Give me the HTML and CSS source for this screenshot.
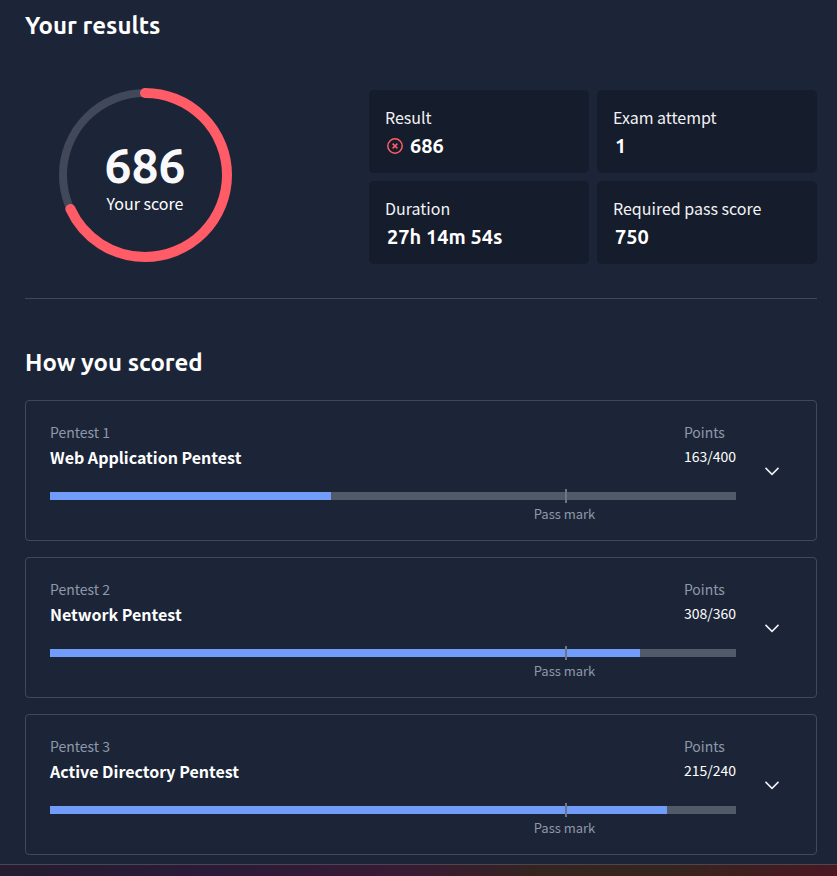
FILE: index.html
```
<!DOCTYPE html>
<html lang="en">
<head>
    <meta charset="UTF-8">
    <meta name="viewport" content="width=device-width, initial-scale=1.0">
    <title>Your results</title>
    <link rel="stylesheet" href="styles.css">
</head>
<body>
    <main class="panel">
        <section class="results">
            <h2>Your results</h2>

            <div class="summary">
                <div class="score">
                    <div class="score-ring">
                        <svg viewBox="0 0 174 174" aria-hidden="true">
                            <circle class="ring-track" cx="87" cy="87" r="82" />
                            <circle class="ring-value" cx="87" cy="87" r="82" pathLength="1000" stroke-dasharray="682 1000" transform="rotate(-90 87 87)" />
                        </svg>
                        <div class="score-text">
                            <strong>686</strong>
                            <span>Your score</span>
                        </div>
                    </div>
                </div>

                <dl class="stats">
                    <div class="stat">
                        <dt>Result</dt>
                        <dd>
                            <svg class="fail-icon" viewBox="0 0 16 16" aria-hidden="true">
                                <circle cx="8" cy="8" r="7.2" />
                                <path d="M5.6 5.6l4.8 4.8M10.4 5.6l-4.8 4.8" />
                            </svg>
                            686
                        </dd>
                    </div>
                    <div class="stat">
                        <dt>Exam attempt</dt>
                        <dd>1</dd>
                    </div>
                    <div class="stat">
                        <dt>Duration</dt>
                        <dd>27h 14m 54s</dd>
                    </div>
                    <div class="stat">
                        <dt>Required pass score</dt>
                        <dd>750</dd>
                    </div>
                </dl>
            </div>
        </section>

        <section class="breakdown">
            <h2>How you scored</h2>

            <article class="card">
                <div class="card-body">
                    <div class="card-head">
                        <div>
                            <p class="label">Pentest 1</p>
                            <h3>Web Application Pentest</h3>
                        </div>
                        <div>
                            <p class="label">Points</p>
                            <p class="points">163/400</p>
                        </div>
                    </div>
                    <div class="bar">
                        <div class="bar-track">
                            <div class="bar-fill" style="width: 41%"></div>
                        </div>
                        <div class="pass-mark">Pass mark</div>
                    </div>
                </div>
                <button class="toggle" type="button" aria-label="Show Web Application Pentest" aria-expanded="false">
                    <svg viewBox="0 0 16 16" aria-hidden="true"><path d="M1.5 3.9L8 10.4l6.5-6.5" /></svg>
                </button>
            </article>

            <article class="card">
                <div class="card-body">
                    <div class="card-head">
                        <div>
                            <p class="label">Pentest 2</p>
                            <h3>Network Pentest</h3>
                        </div>
                        <div>
                            <p class="label">Points</p>
                            <p class="points">308/360</p>
                        </div>
                    </div>
                    <div class="bar">
                        <div class="bar-track">
                            <div class="bar-fill" style="width: 86%"></div>
                        </div>
                        <div class="pass-mark">Pass mark</div>
                    </div>
                </div>
                <button class="toggle" type="button" aria-label="Show Network Pentest" aria-expanded="false">
                    <svg viewBox="0 0 16 16" aria-hidden="true"><path d="M1.5 3.9L8 10.4l6.5-6.5" /></svg>
                </button>
            </article>

            <article class="card">
                <div class="card-body">
                    <div class="card-head">
                        <div>
                            <p class="label">Pentest 3</p>
                            <h3>Active Directory Pentest</h3>
                        </div>
                        <div>
                            <p class="label">Points</p>
                            <p class="points">215/240</p>
                        </div>
                    </div>
                    <div class="bar">
                        <div class="bar-track">
                            <div class="bar-fill" style="width: 90%"></div>
                        </div>
                        <div class="pass-mark">Pass mark</div>
                    </div>
                </div>
                <button class="toggle" type="button" aria-label="Show Active Directory Pentest" aria-expanded="false">
                    <svg viewBox="0 0 16 16" aria-hidden="true"><path d="M1.5 3.9L8 10.4l6.5-6.5" /></svg>
                </button>
            </article>
        </section>
    </main>
</body>
</html>
```
FILE: styles.css
```
* {
    margin: 0;
    padding: 0;
    box-sizing: border-box;
}

body {
    min-height: 100vh;
    background: linear-gradient(90deg, #241c30 0%, #2b1a38 25%, #381a34 48%, #35241f 65%, #36241e 80%, #4a1722 100%);
    color: #fff;
    font-family: "Source Sans Pro", "Noto Sans CJK SC", sans-serif;
    font-size: 16px;
    line-height: 24px;
}

h2 {
    font-family: Ubuntu, "Noto Sans", sans-serif;
    font-size: 24px;
    font-weight: 600;
    line-height: 32px;
}

.panel {
    padding: 10px 20px 9px 25px;
    background-color: #1c2538;
    border-bottom: 1px solid #4b4650;
}

/* Summary */

.results {
    padding-bottom: 34px;
    border-bottom: 1px solid #414959;
}

.summary {
    display: flex;
    align-items: flex-start;
    margin-top: 46px;
}

.score {
    flex: 0 0 344px;
    padding-left: 33px;
}

.score-ring {
    display: grid;
    width: 174px;
    height: 174px;
}

.score-ring > * {
    grid-area: 1 / 1;
}

.score-ring circle {
    fill: none;
}

.ring-track {
    stroke: #40485a;
    stroke-width: 8;
}

.ring-value {
    stroke: #ff5c67;
    stroke-width: 10;
    stroke-linecap: round;
}

.score-text {
    display: flex;
    flex-direction: column;
    align-items: center;
    justify-content: center;
    padding-top: 4px;
}

.score-text strong {
    font-family: Ubuntu, "Noto Sans", sans-serif;
    font-size: 48px;
    font-weight: 600;
    line-height: 52px;
    color: #f9f9fb;
}

.stats {
    flex: 1;
    display: grid;
    grid-template-columns: 1fr 1fr;
    gap: 8px;
    margin-top: 2px;
}

.stat {
    padding: 15px 16px 10px;
    background-color: #151c2b;
    border-radius: 5px;
}

.stat dt {
    color: #f2f3f5;
}

.stat dd {
    display: flex;
    align-items: center;
    gap: 7px;
    padding-left: 2px;
    font-family: Ubuntu, "Noto Sans", sans-serif;
    font-size: 20px;
    font-weight: 600;
    line-height: 34px;
}

.fail-icon {
    width: 16px;
    height: 16px;
    fill: none;
    stroke: #ff5c67;
    stroke-width: 1.5;
}

/* Score cards */

.breakdown {
    display: flex;
    flex-direction: column;
    gap: 16px;
    padding-top: 48px;
}

.breakdown h2 {
    margin-bottom: 5px;
}

.card {
    display: flex;
    align-items: center;
    gap: 16px;
    padding: 19px 24px 16px;
    border: 1px solid #414959;
    border-radius: 4px;
}

.card-body {
    flex: 1;
}

.card-head {
    display: flex;
    justify-content: space-between;
}

.label {
    font-size: 14px;
    color: #8f98a8;
}

.card h3 {
    font-size: 16px;
    font-weight: 700;
    line-height: 26px;
}

.points {
    font-size: 14px;
}

.bar {
    position: relative;
    margin-top: 22px;
}

.bar-track {
    height: 8px;
    background-color: #515a68;
}

.bar-fill {
    height: 100%;
    background-color: #719cf9;
}

/* Pass mark tick at 75% of the bar */
.bar::after {
    content: "";
    position: absolute;
    top: -3px;
    left: 75%;
    width: 2px;
    height: 14px;
    background-color: #6b7586;
}

.pass-mark {
    width: 50%;
    margin: 4px 0 0 50%;
    font-size: 13px;
    line-height: 20px;
    text-align: center;
    color: #8f98a8;
}

.toggle {
    display: flex;
    align-items: center;
    justify-content: center;
    width: 40px;
    height: 40px;
    background: none;
    border: 0;
    color: #f2f3f5;
    cursor: pointer;
}

.toggle svg {
    width: 16px;
    height: 16px;
    fill: none;
    stroke: currentColor;
    stroke-width: 1.5;
}
```
